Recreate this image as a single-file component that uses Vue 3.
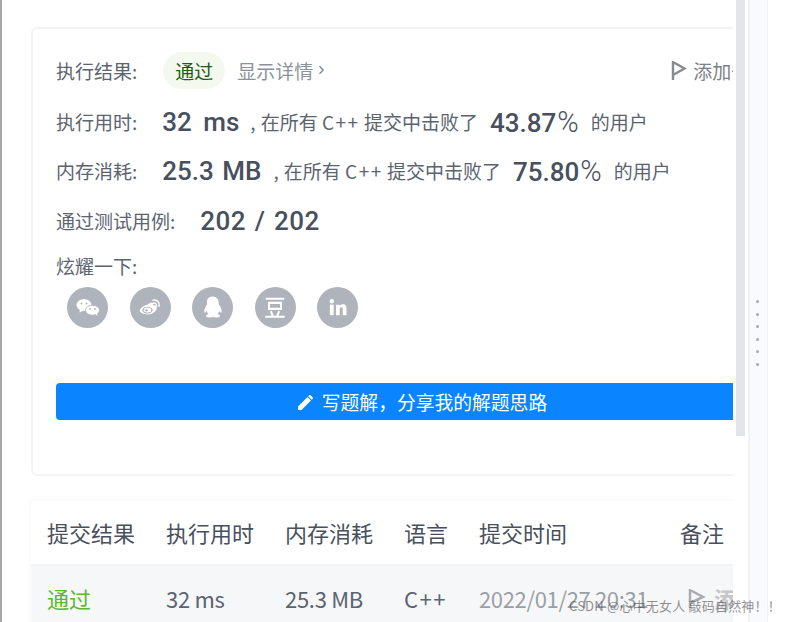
<script setup>
const shares = ['wechat', 'weibo', 'qq', 'douban', 'linkedin']
const stats = [
  { label: '执行用时:', value: '32 ms', pct: '43.87', cls: 'time' },
  { label: '内存消耗:', value: '25.3 MB', pct: '75.80', cls: 'mem' }
]
</script>

<template>
  <div class="page">
    <main class="main">
      <section class="card">
        <div class="row result">
          <span class="label">执行结果:</span>
          <span class="pill">通过</span>
          <span class="detail">显示详情</span>
          <svg class="chev" width="7" height="10" viewBox="0 0 7 10"><path d="M1.5 1.2 5.2 5 1.5 8.8" fill="none" stroke="#7b8591" stroke-width="1.3"/></svg>
          <span class="note">
            <svg width="16" height="20" viewBox="0 0 16 20"><path d="M2 1v19M2 2l11.500 6.500L2 15" fill="none" stroke="#868b92" stroke-width="2.400"/></svg>
            <span>添加备注</span>
          </span>
        </div>
        <div v-for="s in stats" :key="s.cls" class="row stat" :class="s.cls">
          <span class="label">{{ s.label }}</span>
          <strong class="num">{{ s.value }}</strong>
          <span class="text"><span class="comma">,</span>在所有 <span class="cpp">C++</span> 提交中击败了</span>
          <strong class="pct">{{ s.pct }}<i>%</i></strong>
          <span class="text users">的用户</span>
        </div>
        <div class="row cases">
          <span class="label">通过测试用例:</span>
          <strong class="num">202 / 202</strong>
        </div>
        <div class="share-title">炫耀一下:</div>
        <div class="shares">
          <span v-for="s in shares" :key="s" class="share">
            <svg v-if="s === 'wechat'" width="24" height="17" viewBox="0 0 24 17" fill="#fff">
              <ellipse cx="8" cy="6" rx="7.500" ry="6"/><path d="M4 10l-.5 3.500 4-2z"/>
              <ellipse cx="16.500" cy="11.200" rx="7" ry="5" stroke="#afb3bb" stroke-width=".8"/><path d="M19.500 15l2 2-.3-3.500z"/>
              <circle cx="5.500" cy="4.500" r="1" fill="#afb3bb"/><circle cx="10.500" cy="4.500" r="1" fill="#afb3bb"/>
              <circle cx="14" cy="10" r=".9" fill="#afb3bb"/><circle cx="19" cy="10" r=".9" fill="#afb3bb"/>
            </svg>
            <svg v-else-if="s === 'weibo'" width="23" height="19" viewBox="0 0 26 22">
              <path d="M10 7.500c3-2.500 5.500-3 6-1 .3 1-.5 2 .5 2 3.500 0 4.500 2 3.500 4.500-1.500 3.800-6 6-10.500 6S.500 17 .500 14.500C.500 12.500 5 8.500 10 7.500z" fill="#fff"/>
              <ellipse cx="9.500" cy="14" rx="6" ry="4" fill="#afb3bb"/>
              <ellipse cx="9.500" cy="14" rx="4.400" ry="2.900" fill="#fff"/>
              <circle cx="8.500" cy="14.300" r="1.400" fill="#afb3bb"/>
              <path d="M16 2.500c4-1 8 2 7 7M16.500 6c2-.5 4 1 3.500 3.500" fill="none" stroke="#fff" stroke-width="1.700" stroke-linecap="round"/>
            </svg>
            <svg v-else-if="s === 'qq'" width="23" height="23" viewBox="0 0 23 23" fill="#fff">
              <path d="M11.500.5c4 0 6.300 3 6.300 6.800 0 1 .5 1.700 1.200 3 1.300 2 2 4.500 1.600 6-.3 1-1.300.2-2.300-1.300-.4 1.300-1 2.400-1.800 3.100 1.500.5 2.500 1 2.500 1.900 0 1.200-2.500 1.500-4.500 1.500-1.200 0-2-.3-2.500-.8-.5.5-1.300.8-2.500.8-2 0-4.500-.3-4.500-1.500 0-.9 1-1.400 2.500-1.900-.8-.7-1.400-1.800-1.800-3.100-1 1.500-2 2.300-2.300 1.300-.4-1.500.3-4 1.600-6 .7-1.300 1.200-2 1.200-3C5.200 3.500 7.500.5 11.500.5z"/>
            </svg>
            <svg v-else-if="s === 'douban'" width="24" height="25" viewBox="0 0 26 26" fill="none" stroke="#fff" stroke-width="2.200">
              <path d="M3 3.500h20M6.500 8h13v6.500h-13zM2.500 23h21M8.500 17l2 5M17.500 17l-2 5"/>
            </svg>
            <svg v-else width="21" height="21" viewBox="0 0 22 22" fill="#fff">
              <circle cx="5" cy="4.500" r="2.300"/><rect x="3" y="8" width="4" height="11"/>
              <path d="M9.500 8h3.800v1.600c.8-1.200 2-1.900 3.400-1.900 2.700 0 3.800 1.800 3.800 4.700V19h-4v-6c0-1.400-.4-2.200-1.500-2.200s-1.700.9-1.700 2.200v6h-3.800z"/>
            </svg>
          </span>
        </div>
        <button class="solve">
          <svg width="18" height="18" viewBox="0 0 18 18" fill="#fff"><path d="M1 13.500V17h3.500L14 7.500 10.500 4zM15.700 5.800c.4-.4.400-1 0-1.400l-2.100-2.100c-.4-.4-1-.4-1.400 0l-1 1 3.500 3.500z"/></svg>
          <span>写题解&#xFF0C;分享我的解题思路</span>
        </button>
      </section>

      <section class="table">
        <div class="tr head">
          <span class="c1">提交结果</span><span class="c2">执行用时</span><span class="c3">内存消耗</span>
          <span class="c4">语言</span><span class="c5">提交时间</span><span class="c6">备注</span>
        </div>
        <div class="tr body">
          <span class="c1 ok">通过</span><span class="c2 tight">32 ms</span><span class="c3 tight">25.3 MB</span>
          <span class="c4 lang">C++</span><span class="c5 date">2022/01/27 20:31</span>
          <span class="c6 add">
            <svg width="18" height="22" viewBox="0 0 18 22"><path d="M2 2v19M2 3l13 7L2 16" fill="none" stroke="#a9acb2" stroke-width="2.500"/></svg>
            <b>添加备注</b>
          </span>
        </div>
      </section>
    </main>
    <div class="track"><div class="thumb"></div></div>
    <aside class="side"><div class="strip"></div><div class="dots"><i v-for="n in 6" :key="n"></i></div></aside>
    <div class="mark">CSDN @心中无女人 敲码自然神&#xFF01;&#xFF01;</div>
  </div>
</template>

<style>
body { margin: 0; background: #fff; }
</style>

<style scoped>
.page { position: relative; width: 788px; height: 622px; overflow: hidden; display: flex; background: #fff; color: #4a5360; font-family: "Noto Sans CJK SC", "Noto Sans", sans-serif; border-left: 2px solid #a6a8ab; box-sizing: border-box; }
.main { width: 731px; flex: none; overflow: hidden; padding: 27px 0 0 29px; box-sizing: border-box; }
.card { width: 760px; height: 449px; box-sizing: border-box; border: 2px solid #f3f4f5; border-radius: 6px; padding: 22px 0 0 23px; }
.row { display: flex; align-items: center; white-space: nowrap; }
.row svg, .add svg { flex: none; }
.label { font-size: 19px; color: #5b6470; }
.result { height: 38px; }
.pill { margin-left: 26px; width: 62px; height: 37px; border-radius: 19px; background: #f4f9f0; color: #245a10; font-size: 19px; display: flex; align-items: center; justify-content: center; }
.detail { margin-left: 12px; font-size: 19px; color: #8a929c; }
.chev { margin-left: 5px; }
.note { margin-left: 346px; display: flex; align-items: center; gap: 6px; font-size: 19px; color: #7a818a; }
.stat { height: 49px; }
.stat.time { margin-top: 8px; }
.num { margin-left: 25px; font-family: Roboto, sans-serif; font-weight: 500; font-size: 26px; color: #47505c; word-spacing: 2px; }
.time .num { word-spacing: 5px; }
.text { margin-left: 11px; font-size: 19px; color: #5b6470; }
.mem .text:not(.users) { margin-left: 12px; }
.comma { margin-right: 5px; }
.cpp { letter-spacing: 1.500px; }
.pct { margin-left: 12px; font-family: Roboto, sans-serif; font-weight: 500; font-size: 26px; color: #47505c; }
.pct i { font-style: normal; font-weight: 300; font-size: 29px; margin-left: 1px; }
.users { margin-left: 12px; }
.cases { height: 49px; margin-top: 1px; }
.cases .num { margin-left: 25px; letter-spacing: .4px; }
.share-title { margin-top: 8px; font-size: 19px; line-height: 26px; color: #5b6470; }
.shares { display: flex; gap: 21.500px; margin: 8px 0 0 11px; }
.share { width: 41px; height: 41px; border-radius: 50%; background: #afb3bb; display: flex; align-items: center; justify-content: center; }
.solve { margin-top: 55px; width: 732px; height: 37px; border: none; border-radius: 4px; background: #0a84ff; color: #fff; font: inherit; font-size: 18.800px; padding: 0; display: flex; align-items: center; justify-content: center; gap: 7px; box-sizing: border-box; }
.table { margin-top: 25px; width: 760px; box-shadow: 0 0 6px rgba(0,0,0,.05); }
.tr { display: flex; align-items: center; white-space: nowrap; font-size: 22px; }
.head { height: 65px; color: #47505c; border-bottom: 2px solid #f1f2f4; padding-bottom: 2px; box-sizing: border-box; }
.body { height: 64px; background: #f6f7f9; color: #5b6470; }
.tr span { display: block; box-sizing: border-box; flex: none; }
.c1 { width: 135px; padding-left: 16px; }
.c2 { width: 119px; }
.c3 { width: 119px; }
.c4 { width: 75px; }
.c5 { width: 201px; }
.c6 { width: 111px; }
.tight { letter-spacing: -.3px; }
.lang { letter-spacing: 1.500px; }
.ok { color: #5cb82f; }
.date { color: #9a9fa6; letter-spacing: -.35px; }
.add { display: flex !important; align-items: center; gap: 8px; padding-left: 8px; }
.add b { font-weight: 700; color: #c4c6ca; }
.track { width: 12px; margin-left: 3px; flex: none; }
.thumb { width: 9px; height: 436px; background: #e4e5ea; }
.side { position: relative; flex: 1; }
.strip { width: 20px; height: 622px; background: #f9fafc; border-left: 2px solid #f1f2f4; border-right: 1px solid #eef0f3; box-sizing: border-box; }
.dots { position: absolute; left: 8px; top: 300px; display: flex; flex-direction: column; gap: 9.500px; }
.dots i { width: 3px; height: 3px; border-radius: 50%; background: #a5a9b0; }
.mark { position: absolute; left: 567px; top: 596px; font-size: 13px; letter-spacing: .2px; color: rgba(70,70,70,.6); white-space: nowrap; }
</style>
